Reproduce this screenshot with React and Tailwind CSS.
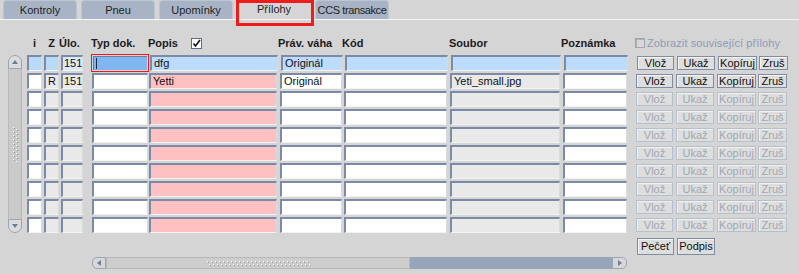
import React from "react";

const FONT = "font-['Liberation_Sans',Arial,sans-serif]";

const tabs = [
  { t: "Kontroly", sel: false, cls: "" },
  { t: "Pneu", sel: false, cls: "" },
  { t: "Upomínky", sel: false, cls: "" },
  { t: "Přílohy", sel: true, cls: "" },
  { t: "CCS transakce", sel: false, cls: "tracking-[-0.4px] text-[10.5px]" },
];

const cols = [
  { k: "i", cls: "w-[15px]" },
  { k: "z", cls: "ml-[2px] w-[15px]" },
  { k: "u", cls: "ml-[2px] w-[22px]" },
  { k: "t", cls: "ml-[9px] w-[56px]" },
  { k: "p", cls: "ml-[1px] w-[128px]" },
  { k: "v", cls: "ml-[3px] w-[62px]" },
  { k: "k", cls: "ml-[2px] w-[103px]" },
  { k: "s", cls: "ml-[3px] w-[110px]" },
  { k: "n", cls: "ml-[3px] w-[64px]" },
];

const btns = [
  { t: "Vlož", cls: "ml-[9px] w-[37px]" },
  { t: "Ukaž", cls: "ml-[3px] w-[38px]" },
  { t: "Kopíruj", cls: "ml-[3px] w-[39px]" },
  { t: "Zruš", cls: "ml-[2px] w-[29px]" },
];

const cellBase =
  "h-[16px] shrink-0 border-t-2 border-l-2 border-t-[#7b8ba7] border-l-[#7b8ba7] border-b border-r border-b-[#f3f3f3] border-r-[#dadada] text-[11px] leading-[13px] overflow-hidden whitespace-nowrap text-[#111]";

const normalBg = {
  i: "bg-white",
  z: "bg-[#e9e9e9]",
  u: "bg-[#e9e9e9]",
  t: "bg-white",
  p: "bg-[#ffc0c1]",
  v: "bg-white",
  k: "bg-white",
  s: "bg-[#e9e9e9]",
  n: "bg-white",
};

const selBg = {
  i: "bg-[#b9d9f9]",
  z: "bg-[#b9d9f9]",
  u: "bg-[#dde9f6]",
  t: "bg-[#7fb6f0]",
  p: "bg-[#bddcfb]",
  v: "bg-[#bddcfb]",
  k: "bg-[#bddcfb]",
  s: "bg-[#bddcfb]",
  n: "bg-[#bddcfb]",
};

const rows = [
  { sel: true, enabled: true, v: { u: "151", p: "dfg", v: "Originál" } },
  { sel: false, enabled: true, v: { z: "R", u: "151", p: "Yetti", v: "Originál", s: "Yeti_small.jpg" } },
  { sel: false, enabled: false, v: {} },
  { sel: false, enabled: false, v: {} },
  { sel: false, enabled: false, v: {} },
  { sel: false, enabled: false, v: {} },
  { sel: false, enabled: false, v: {} },
  { sel: false, enabled: false, v: {} },
  { sel: false, enabled: false, v: {} },
  { sel: false, enabled: false, v: {} },
];

function Grip({ w, h, horizontal }) {
  const dots = [];
  if (horizontal) {
    for (let x = 1; x < w; x += 4) {
      dots.push(<rect key={"a" + x} x={x} y={1} width={1} height={1} fill="#ffffff" />);
      dots.push(<rect key={"b" + x} x={x + 2} y={4} width={1} height={1} fill="#ffffff" />);
      dots.push(<rect key={"c" + x} x={x + 1} y={2} width={1} height={1} fill="#9a9a9a" />);
      dots.push(<rect key={"d" + x} x={x + 3} y={5} width={1} height={1} fill="#9a9a9a" />);
    }
  } else {
    for (let y = 1; y < h; y += 4) {
      dots.push(<rect key={"a" + y} x={1} y={y} width={1} height={1} fill="#ffffff" />);
      dots.push(<rect key={"b" + y} x={4} y={y + 2} width={1} height={1} fill="#ffffff" />);
      dots.push(<rect key={"c" + y} x={2} y={y + 1} width={1} height={1} fill="#9a9a9a" />);
      dots.push(<rect key={"d" + y} x={5} y={y + 3} width={1} height={1} fill="#9a9a9a" />);
    }
  }
  return (
    <svg width={w} height={h} viewBox={`0 0 ${w} ${h}`}>
      {dots}
    </svg>
  );
}

function Arrow({ dir }) {
  const pts = {
    up: "1,5 4,1 7,5",
    down: "1,1 4,5 7,1",
    left: "5,1 1,4 5,7",
    right: "1,1 5,4 1,7",
  }[dir];
  const vert = dir === "up" || dir === "down";
  return (
    <svg width={vert ? 8 : 6} height={vert ? 6 : 8} viewBox={vert ? "0 0 8 6" : "0 0 6 8"}>
      <polygon points={pts} fill="#6d7d96" />
    </svg>
  );
}

function Btn({ t, cls, enabled }) {
  return (
    <div
      className={
        cls +
        " h-[14px] mt-[1px] shrink-0 flex items-center justify-center whitespace-nowrap text-[11px] leading-[12px] bg-[#dedede] border " +
        (enabled
          ? "border-[#7f8ca3] text-[#111] shadow-[inset_1px_1px_0_#f4f4f4]"
          : "border-[#b6bfcc] text-[#a0a8b4] shadow-[inset_1px_1px_0_#f0f0f0]")
      }
    >
      {t}
    </div>
  );
}

function Row({ row }) {
  return (
    <div className="h-[18px] flex items-start">
      {cols.map((c) => {
        if (row.sel && c.k === "t") {
          return (
            <div
              key={c.k}
              className="ml-[8px] w-[58px] h-[18px] -mt-[1px] shrink-0 border border-[#ee1a1a] p-[1px]"
            >
              <div className="w-full h-full bg-[#7fb6f0] border-t border-l border-[#5d7fa8] flex items-center">
                <div className="ml-[2px] w-[1px] h-[11px] bg-[#1d2b45]" />
              </div>
            </div>
          );
        }
        const bg = row.sel ? selBg[c.k] : normalBg[c.k];
        const pad = c.k === "z" || c.k === "i" ? " text-center" : c.k === "u" ? " pl-[1px]" : " pl-[2px]";
        return (
          <div key={c.k} className={cellBase + " " + c.cls + " " + bg + pad}>
            {row.v[c.k] || ""}
          </div>
        );
      })}
      {btns.map((b) => (
        <Btn key={b.t} t={b.t} cls={b.cls} enabled={row.enabled} />
      ))}
    </div>
  );
}

export default function App() {
  return (
    <div className={"w-[799px] h-[274px] bg-[#d5d5d5] overflow-hidden flex flex-col " + FONT}>
      {/* Tabs */}
      <div className="h-[19px] flex pl-[3px] gap-[4px] shrink-0">
        {tabs.map((tab) => (
          <div
            key={tab.t}
            className={
              "relative w-[74px] h-[19px] rounded-t-[4px] flex items-center justify-center whitespace-nowrap text-[11px] text-[#1e1e1e] " +
              (tab.sel ? "bg-[#d5d5d5] " : "bg-[#a8b4c5] border-t border-x border-[#bcc5d2] ") +
              tab.cls
            }
          >
            {tab.t}
            {tab.sel && (
              <div className="absolute left-[-1px] top-0 w-[78px] h-[26px] border-[3px] border-[#ee1c1c] z-10" />
            )}
          </div>
        ))}
      </div>

      {/* Content */}
      <div className="flex-1 border-t border-[#f6f6f6] flex flex-col">
        {/* Header */}
        <div className="mt-[16px] h-[14px] flex items-center pl-[27px] text-[11px] font-bold text-[#1c1c1c] leading-[14px] whitespace-nowrap">
          <div className="w-[15px] text-center">i</div>
          <div className="ml-[2px] w-[15px] text-center">Z</div>
          <div className="ml-[0px] w-[24px]">Úlo.</div>
          <div className="ml-[8px] w-[57px]">Typ dok.</div>
          <div className="ml-[0px] w-[130px] flex items-center">
            <span>Popis</span>
            <div className="ml-[13px] w-[11px] h-[11px] bg-white border border-[#5c6d88] flex items-center justify-center">
              <svg width="9" height="9" viewBox="0 0 9 9">
                <polyline points="1.5,4.5 3.5,7 8,1" fill="none" stroke="#111" strokeWidth="1.6" />
              </svg>
            </div>
          </div>
          <div className="w-[63px]">Práv. váha</div>
          <div className="ml-[1px] w-[107px]">Kód</div>
          <div className="w-[112px]">Soubor</div>
          <div className="w-[74px]">Poznámka</div>
          <div className="flex items-center font-normal">
            <div className="w-[10px] h-[10px] border border-[#9ea6b3] bg-[#d9d9d9] shadow-[inset_1px_1px_0_#b0b0b0]" />
            <span className="ml-[2px] text-[#8c9bb7] tracking-[0.1px]">Zobrazit související přílohy</span>
          </div>
        </div>

        {/* Rows with vertical scrollbar */}
        <div className="mt-[5px] flex">
          <div className="ml-[8px] w-[14px] h-[178px] flex flex-col shrink-0">
            <div className="h-[14px] rounded-t-[7px] border border-[#9aa5b6] bg-[#dcdcdc] flex items-center justify-center">
              <Arrow dir="up" />
            </div>
            <div className="flex-1 bg-[#cacaca] border-x border-[#b9b9b9] flex items-center justify-center">
              <Grip w={7} h={36} />
            </div>
            <div className="h-[14px] rounded-b-[7px] border border-[#9aa5b6] bg-[#dcdcdc] flex items-center justify-center">
              <Arrow dir="down" />
            </div>
          </div>
          <div className="ml-[5px] flex flex-col">
            {rows.map((r, i) => (
              <Row key={i} row={r} />
            ))}
          </div>
        </div>

        {/* Bottom */}
        <div className="flex items-start">
          <div className="w-[636px] shrink-0 pt-[22px] pl-[92px]">
            <div className="w-[535px] h-[12px] flex">
              <div className="w-[14px] h-[12px] rounded-l-[5px] border border-[#9aa5b6] bg-[#d8d8d8] flex items-center justify-center">
                <Arrow dir="left" />
              </div>
              <div className="w-[304px] h-[12px] bg-[#cdcdcd] border border-[#b8b8b8] flex items-center justify-center">
                <Grip w={104} h={7} horizontal />
              </div>
              <div className="flex-1 h-[12px] bg-[#97a5ba]" />
              <div className="w-[15px] h-[12px] rounded-r-[5px] border border-[#9aa5b6] bg-[#d8d8d8] flex items-center justify-center">
                <Arrow dir="right" />
              </div>
            </div>
          </div>
          <div className="pt-[3px] flex">
            <div className="ml-[1px] w-[37px] h-[17px] flex items-center justify-center text-[11px] bg-[#dedede] border border-[#7f8ca3] shadow-[inset_1px_1px_0_#f4f4f4] text-[#111]">
              Pečeť
            </div>
            <div className="ml-[3px] w-[38px] h-[17px] flex items-center justify-center text-[11px] bg-[#dedede] border border-[#7f8ca3] shadow-[inset_1px_1px_0_#f4f4f4] text-[#111]">
              Podpis
            </div>
          </div>
        </div>
      </div>
    </div>
  );
}
